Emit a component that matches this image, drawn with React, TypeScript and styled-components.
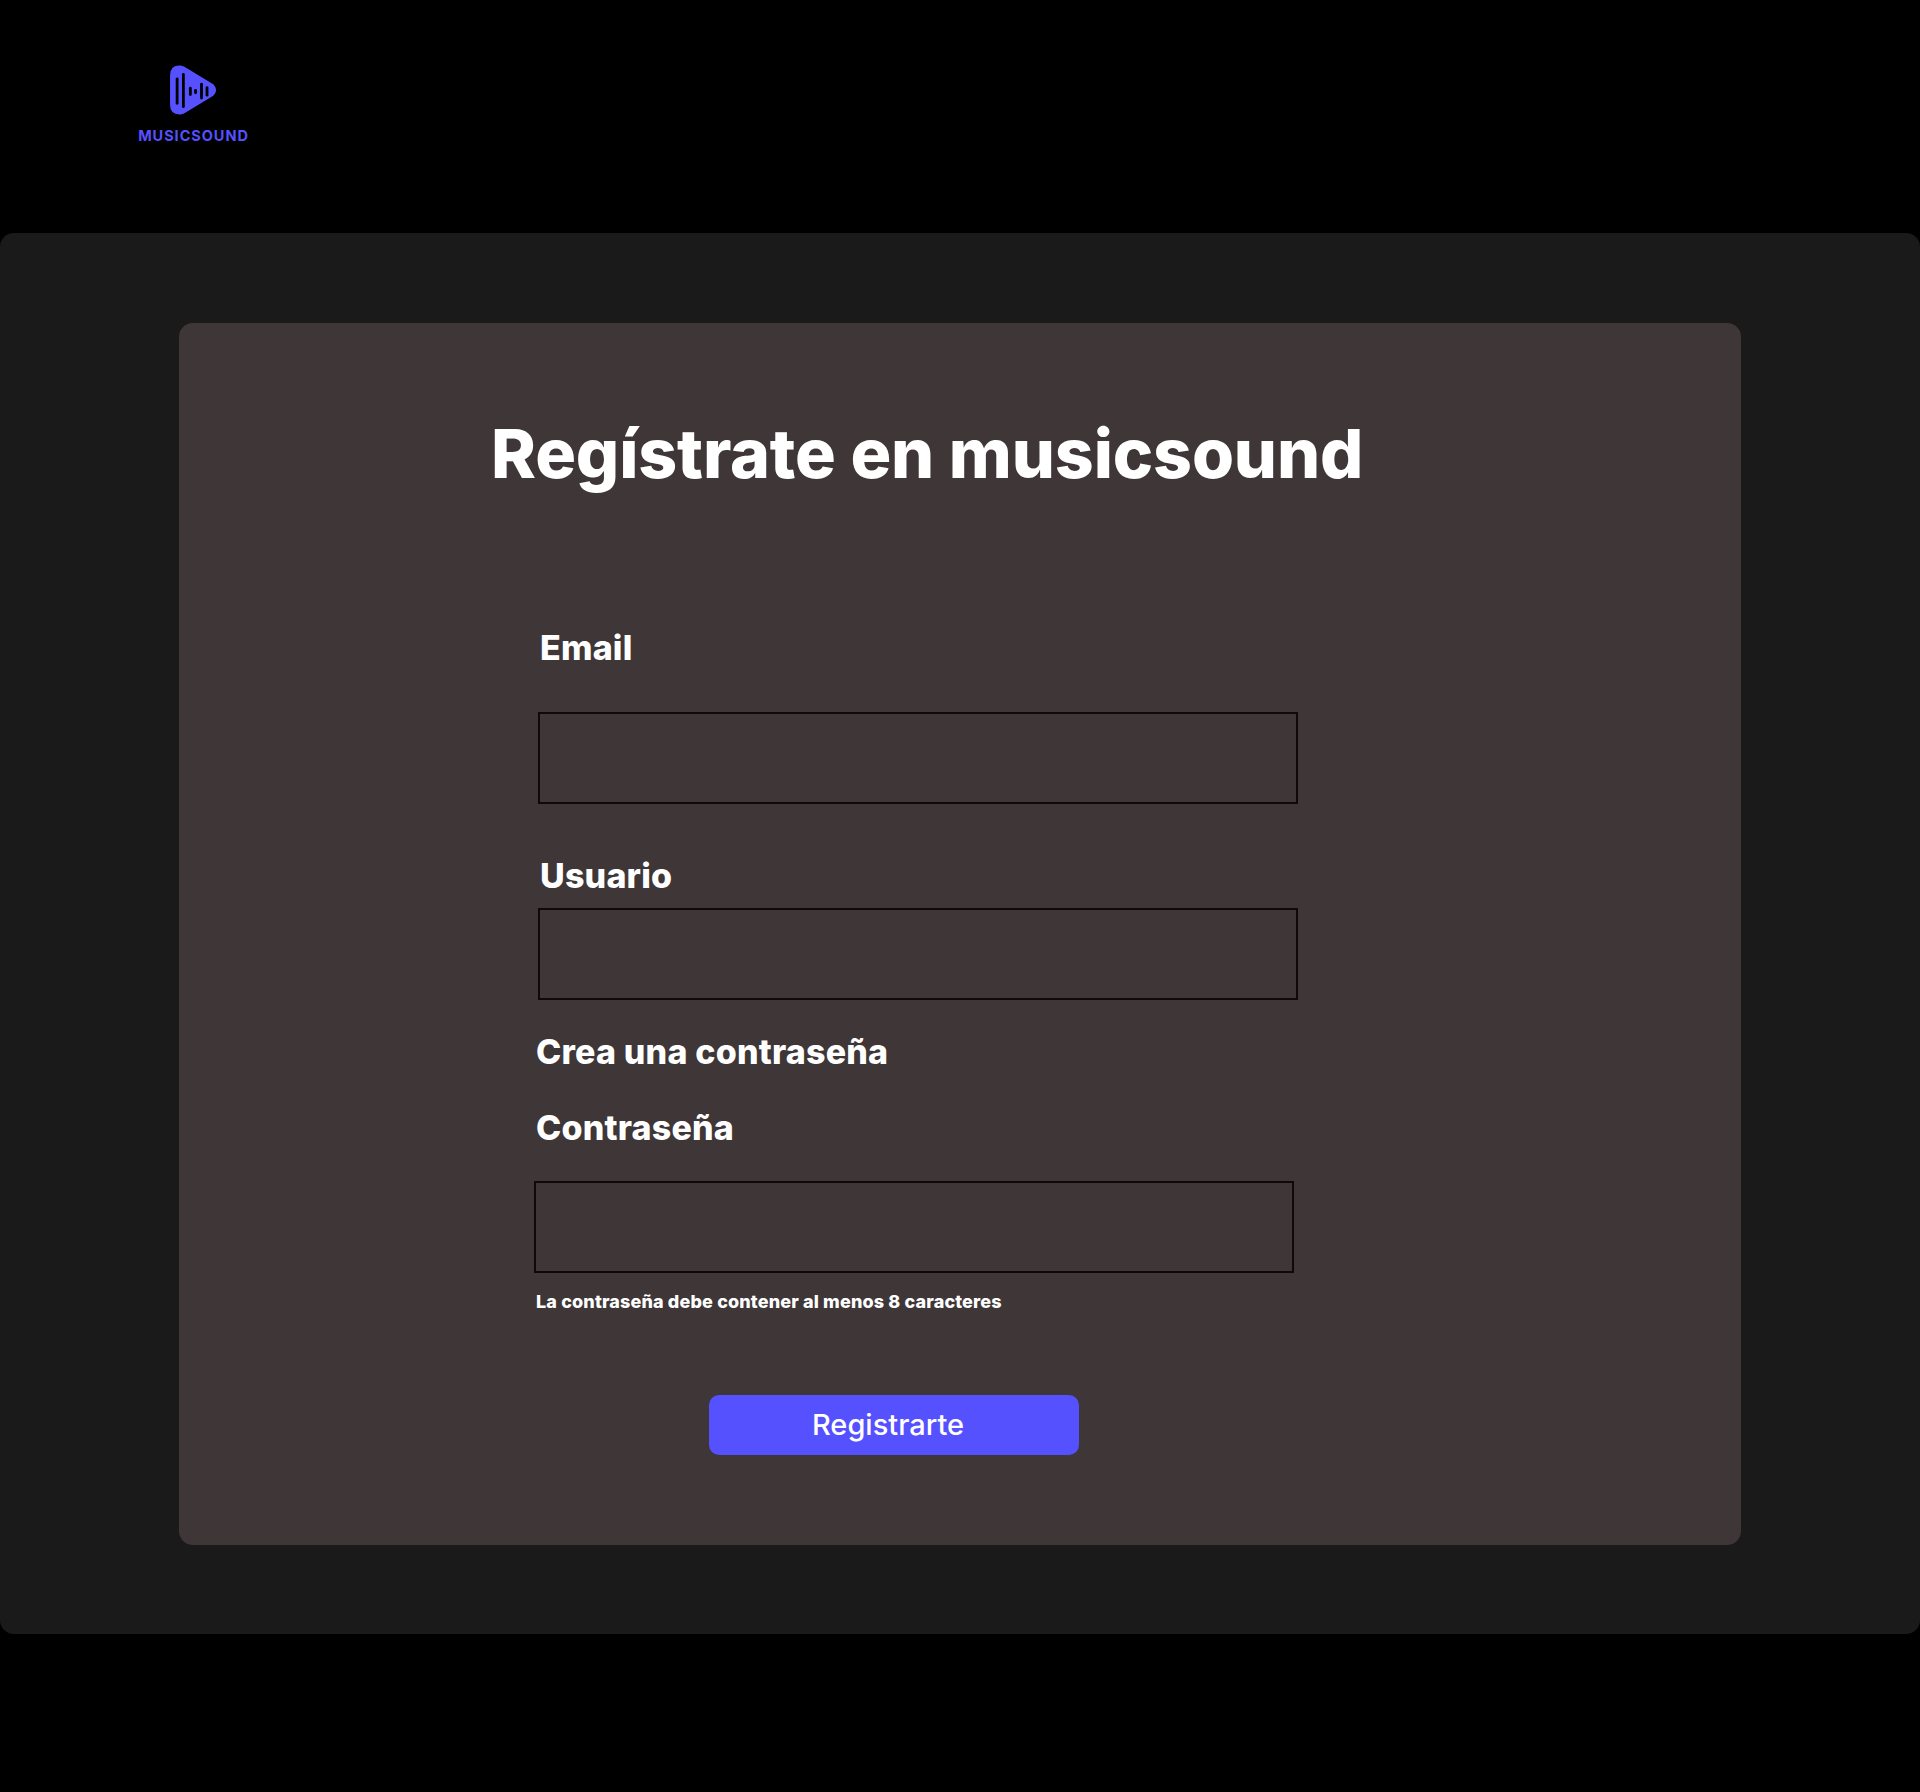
import React from 'react';
import styled, { createGlobalStyle } from 'styled-components';

const GlobalStyle = createGlobalStyle`
    body {
        margin: 0;
        background: #000;
        font-family: 'Inter', 'Liberation Sans', sans-serif;
    }
`;

const Page = styled.div`
    min-height: 1792px;
    background: #000;
`;

const Header = styled.header`
    height: 233px;
    box-sizing: border-box;
    padding: 65px 0 0 138px;
`;

const Logo = styled.div`
    display: inline-flex;
    flex-direction: column;
    align-items: center;
    width: 111px;
`;

const LogoText = styled.span`
    margin-top: 12px;
    font-size: 14.5px;
    line-height: 18px;
    font-weight: 700;
    letter-spacing: 0.95px;
    color: #5551ff;
    white-space: nowrap;
`;

const Panel = styled.main`
    height: 1401px;
    box-sizing: border-box;
    padding: 90px 179px 89px;
    background: #1a1a1a;
    border-radius: 14px;
`;

const Card = styled.section`
    height: 100%;
    box-sizing: border-box;
    padding: 90px 0 0 355px;
    background: #3e3637;
    border-radius: 14px;
`;

const Title = styled.h1`
    margin: 0 0 133px -43px;
    font-size: 68px;
    line-height: 80px;
    font-weight: 800;
    letter-spacing: -0.15px;
    color: #fff;
    white-space: nowrap;
`;

const Form = styled.form`
    display: flex;
    flex-direction: column;
    align-items: flex-start;
`;

const Label = styled.label<{ $indent?: number; $gap?: number }>`
    display: block;
    margin: 0 0 ${(p) => p.$gap ?? 0}px ${(p) => p.$indent ?? 0}px;
    font-size: 34px;
    line-height: 44px;
    font-weight: 800;
    letter-spacing: 0.2px;
    color: #fff;
    white-space: nowrap;
`;

const Input = styled.input<{ $indent?: number; $gap?: number }>`
    display: block;
    width: 760px;
    height: 92px;
    box-sizing: border-box;
    margin: 0 0 ${(p) => p.$gap ?? 0}px ${(p) => p.$indent ?? 0}px;
    background: transparent;
    border: 2px solid #110909;
    outline: none;
    color: #fff;
`;

const Hint = styled.p`
    margin: 16px 0 80px 2px;
    font-size: 18px;
    line-height: 26px;
    font-weight: 800;
    letter-spacing: 0.15px;
    color: #fff;
    white-space: nowrap;
`;

const SubmitButton = styled.button`
    width: 370px;
    height: 60px;
    margin-left: 175px;
    padding: 0 12px 2px 0;
    background: #5551ff;
    border: none;
    border-radius: 10px;
    font-family: 'Inter', 'Liberation Sans', sans-serif;
    font-size: 29px;
    font-weight: 500;
    color: #fff;
`;

function LogoMark() {
    const bars = [
        [6.8, 13.3, 36.7],
        [12.8, 9, 40],
        [19.5, 22.3, 28.3],
        [24.5, 24.3, 26.7],
        [30.2, 18.3, 31.7],
        [35.5, 21.7, 29],
    ];
    return (
        <svg width="48" height="50" viewBox="0 0 46 48">
            <path
                d="M0 10 Q0 0 10 0.5 Q13 1 15 2.5 L41.5 18.5 Q47 24 41.5 29.5 L15 45.5 Q13 47 10 47.5 Q0 48 0 38 Z"
                fill="#5551ff"
            />
            {bars.map(([x, y1, y2]) => (
                <line
                    key={x}
                    x1={x}
                    x2={x}
                    y1={y1}
                    y2={y2}
                    stroke="#000"
                    strokeWidth="2.7"
                    strokeLinecap="round"
                />
            ))}
        </svg>
    );
}

export default function App() {
    return (
        <Page>
            <GlobalStyle />
            <Header>
                <Logo>
                    <LogoMark />
                    <LogoText>MUSICSOUND</LogoText>
                </Logo>
            </Header>
            <Panel>
                <Card>
                    <Title>Regístrate en musicsound</Title>
                    <Form onSubmit={(e) => e.preventDefault()}>
                        <Label $indent={6} $gap={42}>Email</Label>
                        <Input $indent={4} $gap={50} type="email" />
                        <Label $indent={6} $gap={10}>Usuario</Label>
                        <Input $indent={4} $gap={30} type="text" />
                        <Label $indent={2} $gap={32}>Crea una contraseña</Label>
                        <Label $indent={2} $gap={31}>Contraseña</Label>
                        <Input type="password" />
                        <Hint>La contraseña debe contener al menos 8 caracteres</Hint>
                        <SubmitButton type="submit">Registrarte</SubmitButton>
                    </Form>
                </Card>
            </Panel>
        </Page>
    );
}
